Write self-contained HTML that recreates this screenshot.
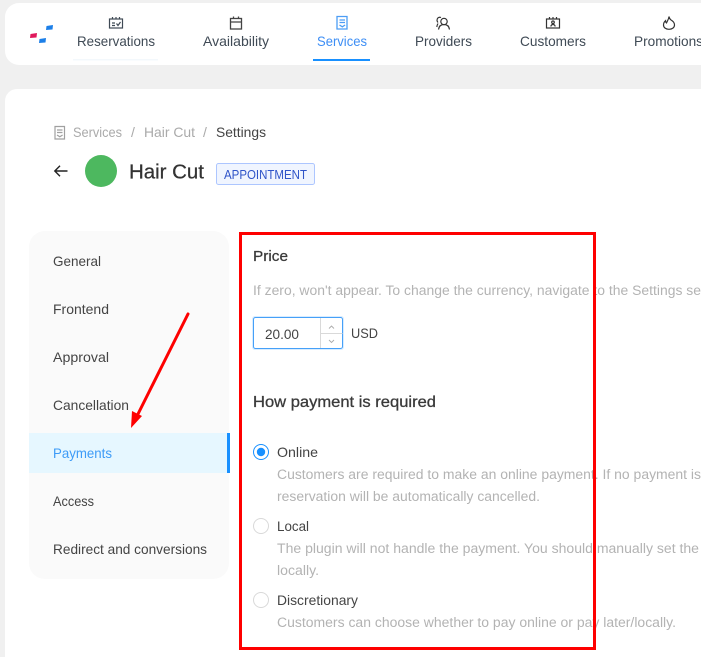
<!DOCTYPE html>
<html><head><meta charset="utf-8">
<style>
html,body{margin:0;padding:0;width:701px;height:657px;overflow:hidden;background:#f0f0f0}
svg{display:block}
text{font-family:"Liberation Sans",sans-serif;font-size:14px;fill:#444}
.g{fill:#b3b3b3;font-size:13.5px}
.n{fill:#3f4a55;font-size:14px}
.s{fill:#444;font-size:14px}
</style></head><body>
<svg width="701" height="657" viewBox="0 0 701 657" xmlns="http://www.w3.org/2000/svg">
<rect x="0" y="0" width="701" height="657" fill="#f0f0f0"/>
<rect x="5" y="3" width="720" height="62" rx="14" fill="#fff"/>
<rect x="5" y="89" width="720" height="600" rx="12" fill="#fff"/>
<!-- logo -->
<path d="M30.500 34 L37 33 L36.500 37.500 L30 38Z" fill="#e0195c"/>
<path d="M39.500 39 L46 38 L45.500 42.500 L39 43Z" fill="#1c7fe8"/>
<path d="M46.500 26 L53 25 L52.500 29.500 L46 30Z" fill="#1c7fe8"/>
<!-- reservations icon -->
<g fill="none" stroke="#3f4a55" stroke-width="1.200">
<rect x="109.500" y="19" width="13" height="9"/>
<path d="M112.500 17v2M116 17v2M119.500 17v2"/>
<path d="M112 23h3M112 25.500h3M116.500 23.500l1.500 2 2.500-3.500"/>
</g>
<rect x="73" y="59" width="85" height="1.500" fill="#f3f8fc"/>
<!-- availability icon -->
<g fill="none" stroke="#444" stroke-width="1.300">
<rect x="230.500" y="18.500" width="11" height="10.500"/>
<path d="M230.500 22h11M233.500 16.500v2.500M238.500 16.500v2.500"/>
</g>
<!-- services icon -->
<g fill="none" stroke="#4c9df5" stroke-width="1.300">
<path d="M337 16.500h10v12.500h-10z"/>
<path d="M339.500 20h5.500M339.500 22.500h5.500M339.500 25l2.800 1.800 2.800-1.800"/>
</g>
<rect x="313" y="59" width="57" height="2" fill="#1890ff"/>
<!-- providers icon -->
<g fill="none" stroke="#333" stroke-width="1.200">
<circle cx="444" cy="21.500" r="3.200"/>
<path d="M438.500 29.500c.5-3.500 2.500-5 5.500-5s5 1.500 5.500 5"/>
<path d="M441 17.500c-2.500-1-4 1-4 2.800 0 1 .5 1.700 1 2.200M438 23.500c-.6 1-1 2-1.200 3.500"/>
</g>
<!-- customers icon -->
<g fill="none" stroke="#333" stroke-width="1.200">
<rect x="546.500" y="19" width="13" height="9"/>
<path d="M549.500 17v2M553 17v2M556.500 17v2"/>
<circle cx="553" cy="22.300" r="1.300"/>
<path d="M550.800 26.500c.3-1.500 1-2 2.200-2s1.900.5 2.200 2"/>
</g>
<!-- promotions icon -->
<path d="M669 16.500c.5 2.500 1.500 3.300 2.800 4 1.500 1 2.700 2.500 2.700 4.500 0 2.700-2.400 4.300-5.500 4.300s-5.500-1.600-5.500-4.300c0-2 .8-3.200 2-4.300 0 1 .3 1.700 1 2.200.8-2 2.300-3.700 2.500-6.400z" fill="none" stroke="#333" stroke-width="1.200"/>
<text class="n" x="77" y="46" textLength="78" lengthAdjust="spacingAndGlyphs">Reservations</text>
<text class="n" x="203" y="46" textLength="66" lengthAdjust="spacingAndGlyphs">Availability</text>
<text class="n" x="317" y="46" textLength="50" lengthAdjust="spacingAndGlyphs" style="fill:#3d8ef5">Services</text>
<text class="n" x="415" y="46" textLength="57" lengthAdjust="spacingAndGlyphs">Providers</text>
<text class="n" x="520" y="46" textLength="66" lengthAdjust="spacingAndGlyphs">Customers</text>
<text class="n" x="634" y="46" textLength="69" lengthAdjust="spacingAndGlyphs">Promotions</text>
<!-- breadcrumb -->
<g fill="none" stroke="#a0a0a0" stroke-width="1.200">
<path d="M55 126.500h9.500v12.500h-9.500z"/>
<path d="M57 130h5.500M57 132.500h5.500M57 135l2.800 1.800 2.800-1.800"/>
</g>
<text class="g" x="73" y="137" textLength="49" lengthAdjust="spacingAndGlyphs" style="fill:#aaa;font-size:14px">Services</text>
<text class="g" x="131" y="137" style="fill:#aaa;font-size:14px">/</text>
<text class="g" x="144" y="137" textLength="51" lengthAdjust="spacingAndGlyphs" style="fill:#aaa;font-size:14px">Hair Cut</text>
<text class="g" x="203" y="137" style="fill:#aaa;font-size:14px">/</text>
<text class="s" x="216" y="137" textLength="50" lengthAdjust="spacingAndGlyphs">Settings</text>
<!-- header -->
<path d="M67.500 171h-12.500M60 165.800l-5.200 5.200 5.200 5.200" fill="none" stroke="#222" stroke-width="1.400"/>
<circle cx="101" cy="171" r="16" fill="#4db85f"/>
<text x="129" y="178.500" textLength="75" lengthAdjust="spacingAndGlyphs" style="font-size:20px;fill:#333;stroke:#333;stroke-width:.25">Hair Cut</text>
<rect x="216.500" y="163.500" width="98" height="21" rx="2" fill="#f0f5ff" stroke="#adc6ff"/>
<text x="224" y="179" textLength="83" lengthAdjust="spacingAndGlyphs" style="font-size:12.500px;fill:#2f54c8">APPOINTMENT</text>
<!-- sidebar -->
<rect x="29" y="231" width="200" height="348" rx="16" fill="#fafafa"/>
<rect x="29" y="433" width="201" height="40" fill="#e6f7ff"/>
<rect x="227" y="433" width="3" height="40" fill="#1890ff"/>
<text class="s" x="53" y="266" textLength="48" lengthAdjust="spacingAndGlyphs">General</text>
<text class="s" x="53" y="314" textLength="56" lengthAdjust="spacingAndGlyphs">Frontend</text>
<text class="s" x="53" y="362" textLength="56" lengthAdjust="spacingAndGlyphs">Approval</text>
<text class="s" x="53" y="410" textLength="76" lengthAdjust="spacingAndGlyphs">Cancellation</text>
<text class="s" x="53" y="458" textLength="59" lengthAdjust="spacingAndGlyphs" style="fill:#3d9bf7">Payments</text>
<text class="s" x="53" y="506" textLength="41" lengthAdjust="spacingAndGlyphs">Access</text>
<text class="s" x="53" y="554" textLength="154" lengthAdjust="spacingAndGlyphs">Redirect and conversions</text>
<!-- content -->
<text x="253" y="261" textLength="35" lengthAdjust="spacingAndGlyphs" style="font-size:15px;fill:#3a3a3a;stroke:#3a3a3a;stroke-width:.25">Price</text>
<text class="g" x="253" y="295" textLength="448" lengthAdjust="spacingAndGlyphs">If zero, won't appear. To change the currency, navigate to the Settings se</text>
<rect x="252" y="316" width="92" height="34" rx="3" fill="#d8ecff"/>
<rect x="253.500" y="317.500" width="89" height="31" rx="2" fill="#fff" stroke="#46a0f8"/>
<path d="M320.500 318v30M320.500 333.500h22" stroke="#d9d9d9" fill="none"/>
<path d="M329 328.500l2.500-2.500 2.500 2.500M329 340l2.500 2.500 2.500-2.500" fill="none" stroke="#aaa" stroke-width=".9"/>
<text class="s" x="265" y="339" textLength="34" lengthAdjust="spacingAndGlyphs">20.00</text>
<text class="s" x="351" y="338" textLength="27" lengthAdjust="spacingAndGlyphs">USD</text>
<text x="253" y="407" textLength="183" lengthAdjust="spacingAndGlyphs" style="font-size:16px;fill:#3a3a3a;stroke:#3a3a3a;stroke-width:.3">How payment is required</text>
<circle cx="261" cy="452" r="7.500" fill="#fff" stroke="#1890ff"/>
<circle cx="261" cy="452" r="4.200" fill="#1890ff"/>
<circle cx="261" cy="526" r="7.500" fill="#fff" stroke="#d9d9d9"/>
<circle cx="261" cy="600" r="7.500" fill="#fff" stroke="#d9d9d9"/>
<text class="s" x="277" y="457" textLength="41" lengthAdjust="spacingAndGlyphs">Online</text>
<text class="g" x="277" y="479" textLength="424" lengthAdjust="spacingAndGlyphs">Customers are required to make an online payment. If no payment is</text>
<text class="g" x="277" y="501" textLength="263" lengthAdjust="spacingAndGlyphs">reservation will be automatically cancelled.</text>
<text class="s" x="277" y="531" textLength="32" lengthAdjust="spacingAndGlyphs">Local</text>
<text class="g" x="277" y="553" textLength="422" lengthAdjust="spacingAndGlyphs">The plugin will not handle the payment. You should manually set the</text>
<text class="g" x="277" y="575" textLength="42" lengthAdjust="spacingAndGlyphs">locally.</text>
<text class="s" x="277" y="605" textLength="81" lengthAdjust="spacingAndGlyphs">Discretionary</text>
<text class="g" x="277" y="627" textLength="399" lengthAdjust="spacingAndGlyphs">Customers can choose whether to pay online or pay later/locally.</text>
<!-- annotations -->
<rect x="240.500" y="233.500" width="354" height="415" fill="none" stroke="#fe0000" stroke-width="3"/>
<path d="M188 314L137 416" stroke="#fe0000" stroke-width="3" fill="none" stroke-linecap="round"/>
<path d="M131 428L132 411L142 416Z" fill="#fe0000"/>
</svg>
</body></html>
